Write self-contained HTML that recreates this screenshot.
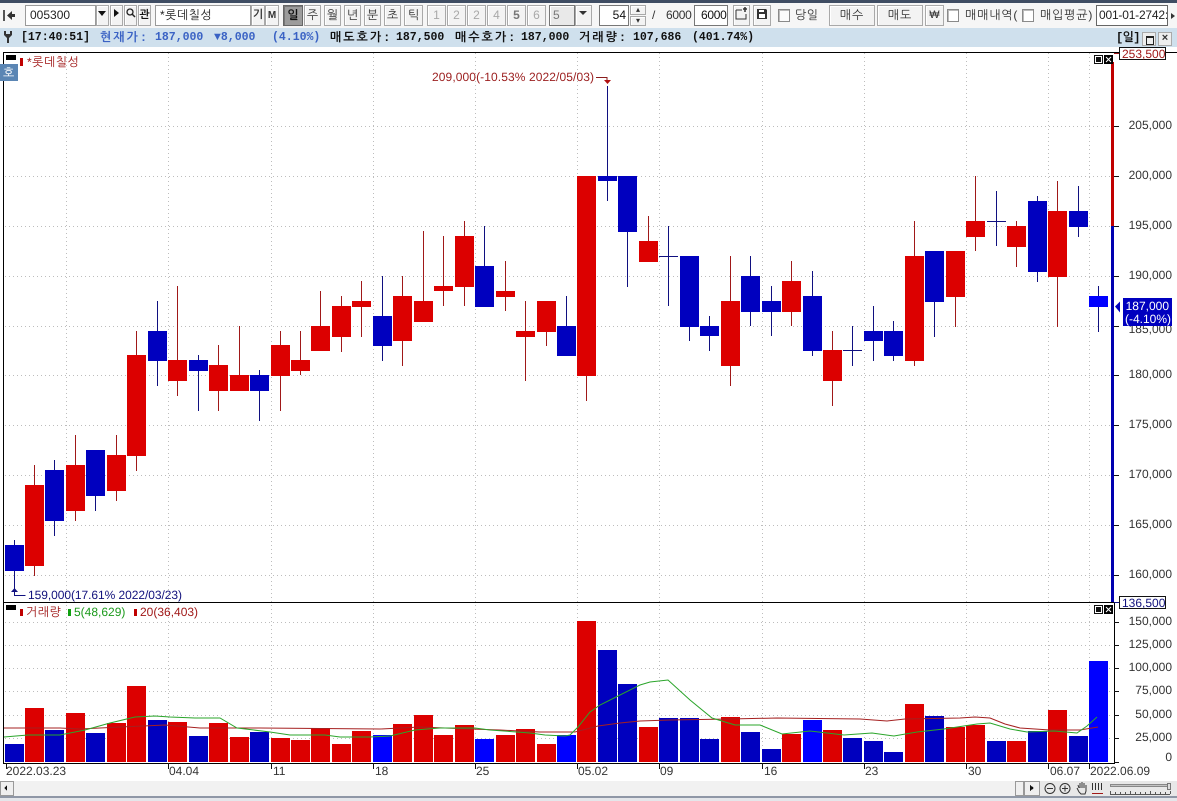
<!DOCTYPE html>
<html lang="ko"><head><meta charset="utf-8"><title>Chart</title>
<style>
html,body{margin:0;padding:0;background:#fff}
#p{position:relative;width:1177px;height:801px;overflow:hidden;background:#fff;font:12px "Liberation Sans","NanumGothic","Noto Sans CJK KR",sans-serif;color:#222}
#p>*{position:absolute;box-sizing:border-box}
.b{height:21px;top:5px;border:1px solid #a9a9a9;background:#f3f3f3;text-align:center;line-height:19px;font-size:12px;color:#333;box-shadow:inset 1px 1px 0 #fff}
.i{height:21px;top:5px;border:1px solid #9a9a9a;background:#fff;line-height:19px;padding-left:4px;color:#222}
.n{color:#a8a8a8}
.c{width:12px;height:13px;top:9px;border:1px solid #8a8a8a;background:#fbfbfb;box-shadow:inset 1px 1px 0 #bbb}
.t{top:31px;font:bold 11.5px/14px "Liberation Mono","NanumGothic","Noto Sans CJK KR",monospace;color:#111;white-space:pre}
.k{letter-spacing:2px;font-size:12px}
.u{color:#3a62c4}
.l{top:7px;line-height:17px;white-space:pre;color:#333}
svg text{font-family:"Liberation Sans","NanumGothic","Noto Sans CJK KR",sans-serif;font-size:12px}
</style></head><body><div id="p">
<div style="left:0;top:0;width:1177px;height:3px;background:#3f4d63"></div>
<div style="left:0;top:3px;width:1177px;height:25px;background:#f6f6f6"></div>
<div style="left:0;top:28px;width:1177px;height:19px;background:#cfe0ed"></div>

<svg style="left:2px;top:9px" width="14" height="13"><path d="M1 1h2v11H1z" fill="#555"/><path d="M5 6.500 10 2v3h3v3h-3v3z" fill="#333"/></svg>
<div class="i" style="left:25px;width:71px;font-size:12px">005300</div>
<div class="b" style="left:96px;width:13px"><svg width="11" height="12"><path d="M1 4h8L5 9z" fill="#111"/></svg></div>
<div class="b" style="left:110px;width:13px"><svg width="11" height="12"><path d="M3 2l5 4-5 4z" fill="#111"/></svg></div>
<div class="b" style="left:124px;width:13px"><svg width="11" height="14"><circle cx="5" cy="6" r="3" fill="none" stroke="#222" stroke-width="1.300"/><path d="M7 8l3 3" stroke="#222" stroke-width="1.500"/></svg></div>
<div class="b" style="left:138px;width:13px;font-weight:bold;font-size:11px;color:#111">관</div>
<div class="i" style="left:155px;width:96px;font-size:12px;letter-spacing:.5px">*롯데칠성</div>
<div class="b" style="left:251px;width:14px;font-weight:bold;font-size:11px">기</div>
<div class="b" style="left:265px;width:14px;font-weight:bold;font-size:10px">M</div>
<div class="b" style="left:283px;width:20px;background:#9c9c9c;border-color:#666;font-weight:bold;color:#111;box-shadow:inset 1px 1px 0 #777">일</div>
<div class="b" style="left:304px;width:17px">주</div>
<div class="b" style="left:324px;width:17px">월</div>
<div class="b" style="left:344px;width:17px">년</div>
<div class="b" style="left:364px;width:17px">분</div>
<div class="b" style="left:384px;width:17px">초</div>
<div class="b" style="left:404px;width:19px">틱</div>
<div class="b n" style="left:427px;width:19px">1</div>
<div class="b n" style="left:447px;width:19px">2</div>
<div class="b n" style="left:467px;width:19px">2</div>
<div class="b n" style="left:487px;width:19px">4</div>
<div class="b" style="left:507px;width:19px;color:#777;font-weight:bold">5</div>
<div class="b n" style="left:527px;width:19px">6</div>
<div class="b n" style="left:549px;width:26px;background:#e9e9e9;text-align:left;padding-left:3px;color:#777;border-color:#777">5</div>
<div class="b" style="left:575px;width:17px"><svg width="11" height="12"><path d="M1 4h8L5 8z" fill="#333"/></svg></div>

<div class="i" style="left:599px;width:30px;text-align:right;padding:0 2px 0 0;color:#111;border-color:#777">54</div>
<div class="b" style="left:630px;width:16px;height:10px;line-height:8px;font-size:8px">▴</div>
<div class="b" style="left:630px;top:16px;width:16px;height:10px;line-height:8px;font-size:8px">▾</div>
<div class="l" style="left:652px">/</div>
<div class="l" style="left:666px;top:7px;letter-spacing:-.3px">6000</div>
<div class="i" style="left:694px;width:34px;padding-left:6px;color:#111;border-color:#777;letter-spacing:-.3px">6000</div>
<div class="b" style="left:733px;width:17px"><svg width="15" height="15"><path d="M2 4h6M2 4v9h10V8" fill="none" stroke="#333"/><path d="M9 3h4M11 1v5" stroke="#333" stroke-width="1.500"/></svg></div>
<div class="b" style="left:753px;width:18px"><svg width="14" height="15"><path d="M2 3h9l1 1v9H2z" fill="#333"/><path d="M4 4h5v2H4zM4 8h6v4H4z" fill="#fff"/></svg></div>
<div class="c" style="left:778px"></div>
<div class="l n" style="left:795px;letter-spacing:.5px">당일</div>
<div class="b" style="left:829px;width:46px;letter-spacing:1px">매수</div>
<div class="b" style="left:877px;width:46px;letter-spacing:1px">매도</div>
<div class="b" style="left:925px;width:19px;font-size:11px">₩</div>
<div class="c" style="left:947px;background:#fff"></div>
<div class="l" style="left:965px;letter-spacing:.8px">매매내역(</div>
<div class="c" style="left:1022px;background:#fff"></div>
<div class="l" style="left:1040px;letter-spacing:.8px">매입평균)</div>
<div class="i" style="left:1096px;width:72px;padding-left:2px;overflow:hidden;white-space:nowrap;border-color:#666;letter-spacing:-.2px">001-01-2742:</div>
<svg style="left:1169px;top:12px" width="8" height="8"><path d="M2 1l4 3-4 3z" fill="#333"/></svg>

<svg style="left:2px;top:30px" width="12" height="15"><path d="M2 1v4l3 3v5h2V8l3-3V1L8 1v3H4V1z" fill="#333"/></svg>
<div class="t" style="left:21px">[17:40:51]</div>
<div class="t u k" style="left:100px">현재가:</div>
<div class="t u" style="left:155px">187,000</div>
<div class="t u" style="left:214px">▼8,000</div>
<div class="t u" style="left:272px">(4.10%)</div>
<div class="t k" style="left:330px">매도호가:</div>
<div class="t" style="left:396px">187,500</div>
<div class="t k" style="left:455px">매수호가:</div>
<div class="t" style="left:521px">187,000</div>
<div class="t k" style="left:579px">거래량:</div>
<div class="t" style="left:633px">107,686</div>
<div class="t" style="left:692px">(401.74%)</div>
<div class="t" style="left:1116px;font-size:12px;letter-spacing:-.6px">[일]</div>
<div style="left:1142px;top:32px;width:14px;height:14px;border:1px solid #aaa;background:#eee"><div style="position:absolute;left:3px;top:3px;width:6px;height:6px;border:1px solid #222;border-top-width:2px"></div></div>
<div style="left:1158px;top:32px;width:14px;height:14px;border:1px solid #aaa;background:#eee;text-align:center;font:bold 11px/11px 'Liberation Sans';color:#333">×</div>

<svg style="left:0;top:0" width="1177" height="801" shape-rendering="crispEdges">
<g stroke="#bdbdbd" stroke-dasharray="1 3" fill="none">
<path d="M5 126.500H1112M5 176.500H1112M5 226.500H1112M5 276.500H1112M5 326.500H1112M5 375.500H1112M5 425.500H1112M5 475.500H1112M5 525.500H1112M5 575.500H1112"/>
<path d="M5 622.500H1112M5 645.500H1112M5 668.500H1112M5 691.500H1112M5 715.500H1112M5 738.500H1112"/>
<path d="M66.500 53V762M168.500 53V762M271.500 53V762M373.500 53V762M475.500 53V762M577.500 53V762M659.500 53V762M762.500 53V762M864.500 53V762M966.500 53V762M1048.500 53V762M1089.500 53V762"/>
</g>
<path fill="none" stroke="#a01818" d="M34.500 465V576M75.500 435V521M116.500 435V501M136.500 331V471M177.500 286V396M218.500 345V411M239.500 326V391M280.500 331V411M300.500 331V375M320.500 291V351M341.500 296V352M361.500 281V337M402.500 276V366M423.500 231V322M443.500 236V306M464.500 221V306M505.500 261V311M525.500 301V381M546.500 301V346M586.500 176V401M648.500 216V262M730.500 256V386M791.500 261V326M832.500 331V406M914.500 221V366M955.500 251V327M975.500 176V251M1016.500 221V267M1057.500 181V327"/>
<path fill="none" stroke="#101080" d="M14.500 540V590M54.500 460V536M95.500 450V511M157.500 301V386M198.500 355V411M259.500 370V421M382.500 276V361M484.500 226V307M566.500 296V356M607.500 86V201M627.500 176V287M668.500 226V306M689.500 256V341M709.500 316V351M750.500 256V326M771.500 286V336M812.500 271V356M852.500 326V366M873.500 306V361M893.500 321V361M934.500 251V337M996.500 191V246M1037.500 196V282M1078.500 186V237M1098.500 286V332"/>
<path fill="none" stroke="#101080" d="M659 256.500h19M843 350.500h19M987 221.500h19"/>
<path fill="#dc0000" d="M25 485h19v81h-19zM66 465h19v46h-19zM107 455h19v36h-19zM127 355h19v101h-19zM168 360h19v21h-19zM209 365h19v26h-19zM230 375h19v16h-19zM271 345h19v31h-19zM291 360h19v11h-19zM311 326h19v25h-19zM332 306h19v31h-19zM352 301h19v6h-19zM393 296h19v45h-19zM414 301h19v21h-19zM434 286h19v5h-19zM455 236h19v51h-19zM496 291h19v6h-19zM516 331h19v6h-19zM537 301h19v31h-19zM577 176h19v200h-19zM639 241h19v21h-19zM721 301h19v65h-19zM782 281h19v31h-19zM823 350h19v31h-19zM905 256h19v105h-19zM946 251h19v46h-19zM966 221h19v16h-19zM1007 226h19v21h-19zM1048 211h19v66h-19z"/>
<path fill="#0000bf" d="M5 545h19v26h-19zM45 470h19v51h-19zM86 450h19v46h-19zM148 331h19v30h-19zM189 360h19v11h-19zM250 375h19v16h-19zM373 316h19v30h-19zM475 266h19v41h-19zM557 326h19v30h-19zM598 176h19v5h-19zM618 176h19v56h-19zM680 256h19v71h-19zM700 326h19v10h-19zM741 276h19v36h-19zM762 301h19v11h-19zM803 296h19v55h-19zM864 331h19v10h-19zM884 331h19v25h-19zM925 251h19v51h-19zM1028 201h19v71h-19zM1069 211h19v16h-19z"/>
<path fill="#0000ff" d="M1089 296h19v11h-19z"/>
<path fill="#dc0000" d="M25 708h19V762h-19zM66 713h19V762h-19zM107 723h19V762h-19zM127 686h19V762h-19zM168 722h19V762h-19zM209 723h19V762h-19zM230 737h19V762h-19zM271 738h19V762h-19zM291 740h19V762h-19zM311 728h19V762h-19zM332 744h19V762h-19zM352 731h19V762h-19zM393 724h19V762h-19zM414 715h19V762h-19zM434 735h19V762h-19zM455 725h19V762h-19zM496 735h19V762h-19zM516 729h19V762h-19zM537 744h19V762h-19zM577 621h19V762h-19zM639 727h19V762h-19zM721 717h19V762h-19zM782 734h19V762h-19zM823 730h19V762h-19zM905 704h19V762h-19zM946 727h19V762h-19zM966 725h19V762h-19zM1007 741h19V762h-19zM1048 710h19V762h-19z"/>
<path fill="#0000bf" d="M5 744h19V762H5zM45 730h19V762h-19zM86 733h19V762H86zM148 720h19V762h-19zM189 736h19V762h-19zM250 732h19V762h-19zM598 650h19V762h-19zM618 684h19V762h-19zM659 718h19V762h-19zM680 718h19V762h-19zM700 739h19V762h-19zM741 732h19V762h-19zM762 749h19V762h-19zM843 738h19V762h-19zM864 741h19V762h-19zM884 752h19V762h-19zM925 716h19V762h-19zM987 741h19V762h-19zM1028 731h19V762h-19zM1069 736h19V762h-19z"/>
<path fill="#0000ff" d="M373 735h19V762h-19zM475 739h19V762h-19zM557 735h19V762h-19zM803 720h19V762h-19zM1089 661h19V762h-19z"/>
<g fill="none" shape-rendering="auto" stroke-width="1">
<polyline stroke="#a52020" points="4,728 60,728 80,729 120,727 165,725 200,728 260,728 380,729 420,727 470,729 500,730 540,732 575,732 598,726 620,723 640,721 670,720 730,719 777,718 860,719 887,721 905,719 960,718 975,717 990,718 1005,724 1020,728 1050,730 1080,730 1098,727"/>
<polyline stroke="#2aa52a" points="4,737 28,735 60,735 85,730 110,723 135,717 155,716 170,717 195,718 220,718 237,728 270,732 290,735 325,735 340,737 370,737 390,736 415,730 440,728 475,728 490,730 530,733 545,735 565,736 570,735 578,727 590,712 600,705 620,695 640,685 650,682 668,680 690,700 712,718 735,725 760,725 782,734 810,731 844,735 872,733 894,736 917,732 944,729 977,724 990,723 1010,729 1027,732 1054,731 1077,733 1087,726 1097,717"/>
</g>
<path fill="none" stroke="#000" d="M3.500 52.500H1177M3.500 602.500H1118M3.500 763.500H1114M3.500 52V764M1114.500 602V764"/>
<path fill="#c00000" d="M1111 62h3v164h-3z"/><path fill="#0000b0" d="M1111 226h3v376h-3z"/>
<path stroke="#111" d="M1114 126.500h5M1114 176.500h5M1114 226.500h5M1114 276.500h5M1114 326.500h5M1114 375.500h5M1114 425.500h5M1114 475.500h5M1114 525.500h5M1114 575.500h5M1114 622.500h5M1114 645.500h5M1114 668.500h5M1114 691.500h5M1114 715.500h5M1114 738.500h5M1114 762.500h5"/>
<path stroke="#111" d="M6.500 763v6M168.500 763v6M271.500 763v6M373.500 763v6M475.500 763v6M577.500 763v6M659.500 763v6M762.500 763v6M864.500 763v6M966.500 763v6M1048.500 763v6M1089.500 763v6"/>
<path fill="#000" d="M6 55h10v5H6zM6 605h10v5H6z"/>
<path fill="#c00000" d="M20 58h3v8h-3zM20 609h3v7h-3zM134 609h3v7h-3z"/><path fill="#10a010" d="M68 609h3v7h-3z"/>
<path fill="#5b86b4" d="M0 64h18v17H0z"/>
<path fill="#fff" stroke="#111" d="M1094.500 55.500h8v8h-8zM1094.500 605.500h8v8h-8z"/>
<path fill="#111" d="M1096 57h5v5h-5zM1096 607h5v5h-5z"/>
<path fill="#000" d="M1104 55h9v9h-9zM1104 605h9v9h-9z"/>
<path stroke="#fff" d="M1106 57l5 5M1111 57l-5 5M1106 607l5 5M1111 607l-5 5" shape-rendering="auto"/>
<path fill="#fff" stroke="#111" d="M1119.500 47.500h46v12h-46zM1119.500 596.500h46v12h-46z"/>
<path stroke="#a01818" d="M1114 53.500h5"/><path stroke="#101080" d="M1114 602.500h5"/>
<g text-rendering="geometricPrecision" fill="#333">
<text x="1172" y="129" text-anchor="end">205,000</text><text x="1172" y="179" text-anchor="end">200,000</text><text x="1172" y="229" text-anchor="end">195,000</text><text x="1172" y="279" text-anchor="end">190,000</text><text x="1172" y="333" text-anchor="end">185,000</text><text x="1172" y="378" text-anchor="end">180,000</text><text x="1172" y="428" text-anchor="end">175,000</text><text x="1172" y="478" text-anchor="end">170,000</text><text x="1172" y="528" text-anchor="end">165,000</text><text x="1172" y="578" text-anchor="end">160,000</text>
</g>
<path fill="#0000bf" d="M1123 298h49v28h-49z"/>
<path fill="#0000bf" shape-rendering="auto" d="M1115 306.500l5-5v11z"/>
<path fill="none" stroke="#8a1c1c" d="M596 77.500h11v3"/><path fill="#b01010" shape-rendering="auto" d="M604 80h7l-3.500 4z"/>
<path fill="none" stroke="#101080" d="M14.500 592v3.500h11"/><path fill="#101080" shape-rendering="auto" d="M11 592h7l-3.500-4z"/>
<g text-rendering="geometricPrecision" fill="#333">
<text x="1172" y="625" text-anchor="end">150,000</text><text x="1172" y="648" text-anchor="end">125,000</text><text x="1172" y="671" text-anchor="end">100,000</text><text x="1172" y="694" text-anchor="end">75,000</text><text x="1172" y="718" text-anchor="end">50,000</text><text x="1172" y="741" text-anchor="end">25,000</text><text x="1172" y="761" text-anchor="end">0</text>
<text x="6" y="775">2022.03.23</text><text x="169" y="775">04.04</text><text x="273" y="775">11</text><text x="375" y="775">18</text><text x="476" y="775">25</text><text x="578" y="775">05.02</text><text x="660" y="775">09</text><text x="764" y="775">16</text><text x="865" y="775">23</text><text x="968" y="775">30</text><text x="1050" y="775">06.07</text><text x="1090" y="775">2022.06.09</text>
<text x="432" y="81" fill="#9c2020" textLength="162">209,000(-10.53% 2022/05/03)</text>
<text x="28" y="599" fill="#10107c" textLength="154">159,000(17.61% 2022/03/23)</text>
<text x="27" y="66" fill="#a01818" letter-spacing=".5">*롯데칠성</text>
<text x="26" y="616" fill="#a01818" letter-spacing=".5">거래량</text>
<text x="74" y="616" fill="#1c9a1c">5(48,629)</text>
<text x="140" y="616" fill="#a01818">20(36,403)</text>
<text x="3" y="77" fill="#fff">호</text>
<text x="1122" y="58" fill="#a01818">253,500</text>
<text x="1122" y="607" fill="#10107c">136,500</text>
<text x="1169" y="310" text-anchor="end" fill="#fff">187,000</text>
<text x="1125" y="323" fill="#fff">(-4.10%)</text>
</g>
<path fill="#f1f1f1" d="M0 781h1015v15H0z"/>
<path fill="#e8e8e8" d="M1040 781h137v15h-137z"/>
<path fill="#efefef" stroke="#999" d="M.5 781.500h13v14H.5zM1015.500 781.500h8v14h-8zM1024.500 781.500h15v14h-15z"/>
<path fill="#111" d="M7 785v6l-3-3zM1030 785v6l4-3z"/>
<path fill="#8f97a6" d="M0 796h1177v2H0z"/><path fill="#e4e6ea" d="M0 798h1177v3H0z"/>
<g fill="none" stroke="#333" shape-rendering="auto">
<circle cx="1050" cy="788.500" r="5"/><path d="M1047 788.500h6"/>
<circle cx="1065" cy="788.500" r="5"/><path d="M1062 788.500h6M1065 785.500v6"/>
<path d="M1077 788l2 4 2 2h4l1-3v-6m-2 3v-5m-2 5v-6m-2 6v-5m-1 5l-1-3"/>
</g>
<path stroke="#333" d="M1092.500 783v7M1095.500 783v7M1098.500 783v7M1101.500 783v7"/>
<path stroke="#a01818" d="M1092 793.500h11"/>
<path fill="#c4c4c4" stroke="#888" d="M1110.500 784.500h58v2h-58z"/><path fill="#ddd" stroke="#777" d="M1167.500 783.500h3v6h-3z"/>
<path stroke="#555" d="M1110 794.500h60M1110.500 791v3M1115.500 792v3M1120.500 792v3M1125.500 792v3M1130.500 791v3M1135.500 792v3M1140.500 792v3M1145.500 792v3M1150.500 791v3M1155.500 792v3M1160.500 792v3M1165.500 792v3M1170.500 791v3"/>
</svg>
</div></body></html>
